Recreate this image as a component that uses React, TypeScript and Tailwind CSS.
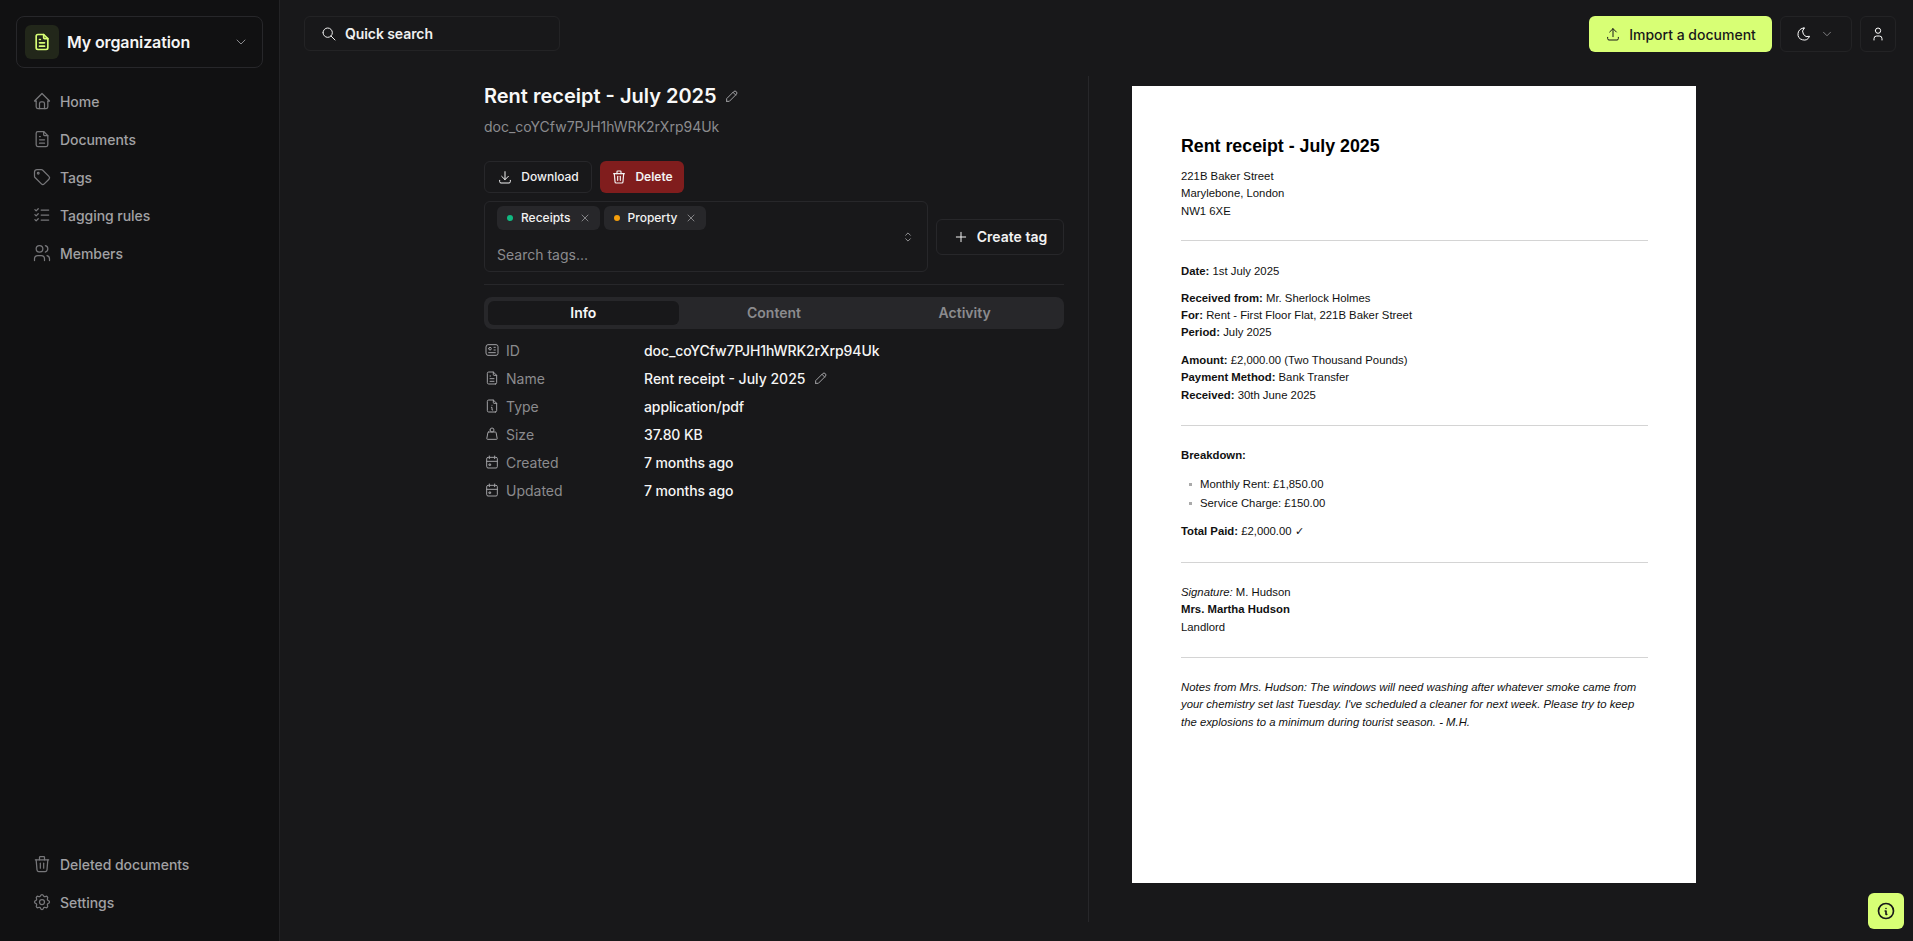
import React from "react";
import {
  TbFileText, TbChevronDown, TbHome, TbTag, TbListCheck, TbUsers, TbTrash, TbSettings, TbSearch, TbUpload,
  TbMoon, TbUser, TbPencil, TbDownload, TbX, TbSelector, TbPlus, TbId, TbFileInfo, TbWeight, TbCalendarEvent, TbInfoCircle,
} from "react-icons/tb";

const nav = [
  { icon: TbHome, label: "Home" },
  { icon: TbFileText, label: "Documents" },
  { icon: TbTag, label: "Tags" },
  { icon: TbListCheck, label: "Tagging rules" },
  { icon: TbUsers, label: "Members" },
];
const bottom = [
  { icon: TbTrash, label: "Deleted documents" },
  { icon: TbSettings, label: "Settings" },
];
const rows = [
  { icon: TbId, label: "ID", value: "doc_coYCfw7PJH1hWRK2rXrp94Uk" },
  { icon: TbFileText, label: "Name", value: "Rent receipt - July 2025", edit: true },
  { icon: TbFileInfo, label: "Type", value: "application/pdf" },
  { icon: TbWeight, label: "Size", value: "37.80 KB" },
  { icon: TbCalendarEvent, label: "Created", value: "7 months ago" },
  { icon: TbCalendarEvent, label: "Updated", value: "7 months ago" },
];

function NavItem({ icon: Icon, label }: { icon: React.ComponentType<any>; label: string }) {
  return (
    <a className="flex h-[38px] items-center gap-[8px] pl-[32px] text-[14px] font-medium tracking-[-0.05px] text-[#a1a1a4]">
      <Icon size={20} strokeWidth={1.5} className="text-[#77777a]" />
      <span>{label}</span>
    </a>
  );
}

function Chip({ color, label }: { color: string; label: string }) {
  return (
    <span className="flex h-[24px] items-center rounded-[6px] bg-[#27272a] pl-[10px] pr-[9px] text-[12px] font-medium text-[#f2f2f2]">
      <span className={`mr-[8px] h-[6px] w-[6px] rounded-full ${color}`} />
      {label}
      <TbX size={12} className="ml-[8px] text-[#a1a1a4]" strokeWidth={1.5} />
    </span>
  );
}

function Hr({ className }: { className: string }) {
  return <div className={`h-px bg-[#d4d4d4] ${className}`} />;
}

export default function App() {
  return (
    <div className="relative flex h-screen overflow-hidden bg-[#18181a] font-['Inter',sans-serif] text-white">
      <aside className="flex w-[280px] shrink-0 flex-col border-r border-[#232325] bg-[#111112] pb-[20px]">
        <div className="mx-[16px] mt-[16px] flex h-[52px] items-center rounded-[8px] border border-[#27272a] pl-[8px] pr-[13px]">
          <span className="flex h-[34px] w-[34px] items-center justify-center rounded-[6px] bg-[#22271a]">
            <TbFileText size={20} className="text-[#d8ff75]" strokeWidth={2} />
          </span>
          <span className="ml-[8px] flex-1 text-[16px] font-semibold tracking-[-0.12px] text-[#f5f5f5]">My organization</span>
          <TbChevronDown size={16} className="text-[#8b8b8e]" strokeWidth={1.5} />
        </div>
        <nav className="mt-[14px] flex flex-col">
          {nav.map((n) => <NavItem key={n.label} {...n} />)}
        </nav>
        <div className="mt-auto flex flex-col">
          {bottom.map((n) => <NavItem key={n.label} {...n} />)}
        </div>
      </aside>

      <main className="flex min-w-0 flex-1 flex-col">
        <header className="flex h-[76px] shrink-0 items-start justify-between pl-[24px] pr-[17px] pt-[16px]">
          <div className="flex h-[35px] w-[256px] items-center rounded-[6px] border border-[#232325] pl-[16px] text-[14px] font-semibold tracking-[-0.08px] text-[#f0f0f0]">
            <TbSearch size={16} strokeWidth={1.5} />
            <span className="ml-[8px]">Quick search</span>
          </div>
          <div className="flex items-center gap-[8px]">
            <button className="flex h-[36px] w-[183px] items-center justify-center gap-[8px] rounded-[6px] bg-[#d8ff75] text-[14px] font-medium text-[#18181a]">
              <TbUpload size={16} strokeWidth={1.5} />
              Import a document
            </button>
            <button className="flex h-[36px] w-[72px] items-center justify-center gap-[8px] rounded-[6px] border border-[#232325] pr-[2px]">
              <TbMoon size={16} strokeWidth={1.5} />
              <TbChevronDown size={14} strokeWidth={1.5} className="text-[#8b8b8e]" />
            </button>
            <button className="flex h-[36px] w-[36px] items-center justify-center rounded-[6px] border border-[#232325]">
              <TbUser size={16} strokeWidth={1.5} />
            </button>
          </div>
        </header>

        <div className="flex min-h-0 flex-1 pb-[19px]">
          <section className="flex w-[808px] shrink-0 justify-end pr-[24px]">
            <div className="w-[580px]">
              <div className="flex h-[40px] items-center">
                <h1 className="text-[20px] font-semibold text-[#f8f8f8]">Rent receipt - July 2025</h1>
                <TbPencil size={16} strokeWidth={1.5} className="ml-[7px] text-[#a1a1a4]" />
              </div>
              <p className="mt-[1px] h-[20px] text-[14px] leading-[20px] text-[#8b8b8e]">doc_coYCfw7PJH1hWRK2rXrp94Uk</p>
              <div className="mt-[24px] flex gap-[8px]">
                <button className="flex h-[32px] w-[108px] items-center justify-center gap-[8px] rounded-[6px] border border-[#27272a] text-[12px] font-medium text-[#f2f2f2]">
                  <TbDownload size={16} strokeWidth={1.5} />Download
                </button>
                <button className="flex h-[32px] w-[84px] items-center justify-center gap-[8px] rounded-[6px] bg-[#801d1d] text-[12px] font-semibold text-[#f2f2f2]">
                  <TbTrash size={16} strokeWidth={1.75} />Delete
                </button>
              </div>
              <div className="mt-[8px] flex items-center gap-[8px]">
                <div className="relative h-[71px] flex-1 rounded-[6px] border border-[#27272a] pl-[12px] pt-[4px]">
                  <div className="flex gap-[4px]">
                    <Chip color="bg-[#10b981]" label="Receipts" />
                    <Chip color="bg-[#f59e0b]" label="Property" />
                  </div>
                  <div className="mt-[15px] text-[14px] leading-[20px] text-[#8b8b8e]">Search tags...</div>
                  <TbSelector size={14} strokeWidth={1.5} className="absolute right-[12px] top-[28px] text-[#a1a1a4]" />
                </div>
                <button className="flex h-[36px] w-[128px] items-center justify-center gap-[8px] rounded-[6px] border border-[#27272a] text-[14px] font-semibold text-[#f2f2f2]">
                  <TbPlus size={16} strokeWidth={1.5} />Create tag
                </button>
              </div>
              <div className="mt-[12px] h-px bg-[#27272a]" />
              <div className="mt-[12px] grid h-[32px] grid-cols-3 items-center rounded-[8px] bg-[#27272a] px-[4px] text-[14px] font-semibold leading-[20px] text-[#8b8b8e]">
                <div className="flex h-[24px] items-center justify-center rounded-[6px] bg-[#18181a] text-[#f8f8f8]">Info</div>
                <div className="text-center">Content</div>
                <div className="text-center">Activity</div>
              </div>
              <div className="mt-[7px] flex flex-col">
                {rows.map((r) => (
                  <div key={r.label} className="flex h-[28px] items-center text-[14px]">
                    <div className="flex w-[160px] items-center gap-[6px] text-[#8b8b8e]">
                      <r.icon size={16} strokeWidth={1.5} className="text-[#a1a1a4]" />
                      {r.label}
                    </div>
                    <div className={`flex items-center gap-[8px] font-medium text-[#f5f5f5] ${r.edit ? "" : "tracking-[-0.1px]"}`}>
                      {r.value}
                      {r.edit && <TbPencil size={16} strokeWidth={1.5} className="text-[#a1a1a4]" />}
                    </div>
                  </div>
                ))}
              </div>
            </div>
          </section>

          <section className="flex-1 border-l border-[#27272a] pl-[43px] pt-[10px]">
            <div className="h-[797px] w-[564px] bg-white pl-[49px] pr-[48px] pt-[48px] font-['Liberation_Sans',sans-serif] text-[11.33px] leading-[17.3px] text-[#111]">
              <h2 className="text-[17.8px] font-bold leading-[24px] text-black">Rent receipt - July 2025</h2>
              <p className="mt-[10px]">221B Baker Street<br />Marylebone, London<br />NW1 6XE</p>
              <Hr className="mt-[20px]" />
              <p className="mt-[22px]"><b>Date:</b> 1st July 2025</p>
              <p className="mt-[9.4px]"><b>Received from:</b> Mr. Sherlock Holmes<br /><b>For:</b> Rent - First Floor Flat, 221B Baker Street<br /><b>Period:</b> July 2025</p>
              <p className="mt-[10.6px]"><b>Amount:</b> £2,000.00 (Two Thousand Pounds)<br /><b>Payment Method:</b> Bank Transfer<br /><b>Received:</b> 30th June 2025</p>
              <Hr className="mt-[21px]" />
              <p className="mt-[21px]"><b>Breakdown:</b></p>
              <ul className="mt-[12px] flex flex-col gap-[1.5px] pl-[19px]">
                <li className="relative"><span className="absolute left-[-11px] top-[7px] h-[3px] w-[3px] bg-[#aaa]" />Monthly Rent: £1,850.00</li>
                <li className="relative"><span className="absolute left-[-11px] top-[7px] h-[3px] w-[3px] bg-[#aaa]" />Service Charge: £150.00</li>
              </ul>
              <p className="mt-[10.5px]"><b>Total Paid:</b> £2,000.00 ✓</p>
              <Hr className="mt-[21.8px]" />
              <p className="mt-[21px]"><i>Signature:</i> M. Hudson<br /><b>Mrs. Martha Hudson</b><br />Landlord</p>
              <Hr className="mt-[21.1px]" />
              <p className="mt-[21px] italic">Notes from Mrs. Hudson: The windows will need washing after whatever smoke came from your chemistry set last Tuesday. I've scheduled a cleaner for next week. Please try to keep the explosions to a minimum during tourist season. - M.H.</p>
            </div>
          </section>
        </div>
      </main>

      <button className="absolute right-[9px] bottom-[12px] flex h-[36px] w-[36px] items-center justify-center rounded-[6px] bg-[#d8ff75] text-[#18181a]">
        <TbInfoCircle size={20} strokeWidth={2} />
      </button>
    </div>
  );
}
